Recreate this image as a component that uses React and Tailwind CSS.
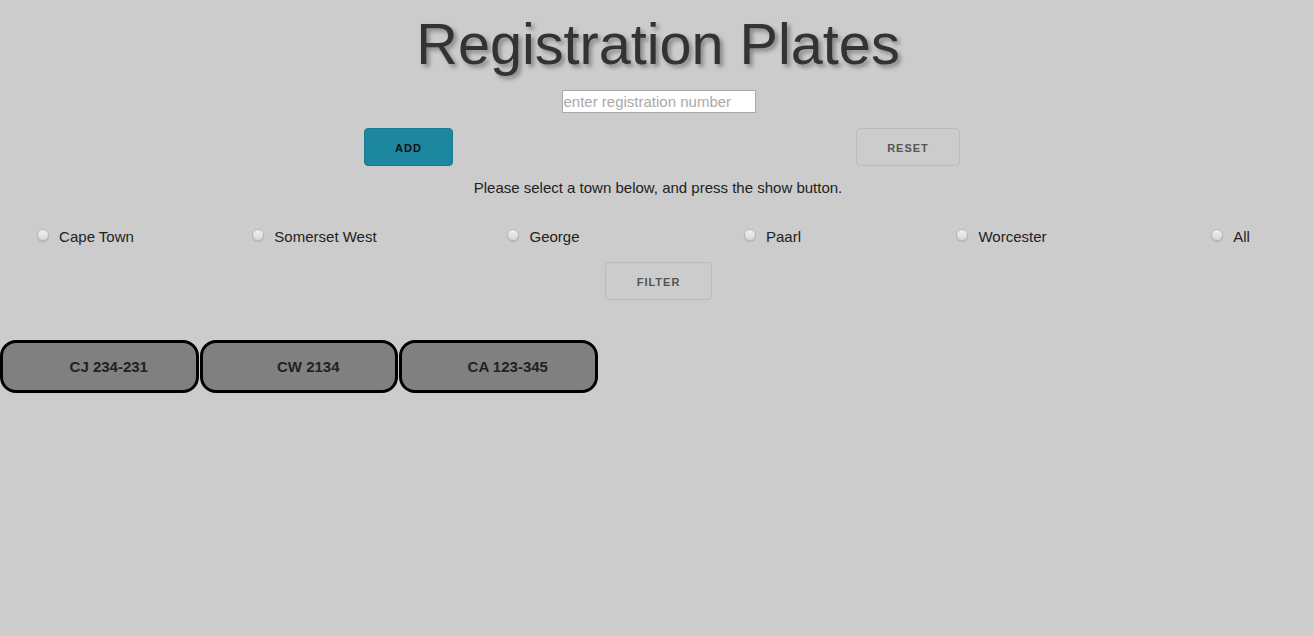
import React from "react";

const towns = ["Cape Town", "Somerset West", "George", "Paarl", "Worcester", "All"];
const plates = ["CJ 234-231", "CW 2134", "CA 123-345"];

function Radio({ label }) {
  return (
    <label className="w-[229px] shrink-0 flex justify-center">
      <span className="flex items-start h-[18px]">
        <span className="w-[12px] h-[12px] rounded-full border border-[#b8b8b8] bg-gradient-to-b from-[#f0f0f0] to-[#d8d8d8] shadow-[0_1px_1px_rgba(0,0,0,0.15)] mt-0 shrink-0"></span>
        <span className="ml-[10px] text-[15px] leading-[18px] text-[#222] mt-[-1px]">{label}</span>
      </span>
    </label>
  );
}

export default function App() {
  return (
    <div className="min-h-[636px] w-full bg-[#cccccc] font-['Liberation_Sans',Arial,sans-serif] text-[#222] overflow-hidden">
      <h1 className="pt-[15px] text-center text-[57.6px] leading-[58px] text-[#333] pl-[3px] [text-shadow:3px_3px_4px_rgba(0,0,0,0.35)]">
        Registration Plates
      </h1>
      <div className="flex justify-center mt-[17px] pl-[4px]">
        <input
          type="text"
          placeholder="enter registration number"
          className="w-[194px] h-[23px] bg-white border border-[#a9a9a9] px-[1px] text-[15px] leading-[21px] outline-none placeholder:text-[#a9a9a9]"
        />
      </div>
      <div className="flex mt-[15px] pl-[364px] gap-[403px]">
        <button className="w-[89px] h-[38px] pt-[2px] rounded-[4px] bg-[#1d879f] border border-[#1a7890] text-[11px] font-bold tracking-[1px] text-[#111] uppercase">
          Add
        </button>
        <button className="w-[104px] h-[38px] pt-[2px] rounded-[4px] border border-[#bbbbbb] text-[11px] font-bold tracking-[1px] text-[#555] uppercase">
          Reset
        </button>
      </div>
      <p className="mt-[13px] text-center text-[15px] leading-[18px] text-[#222] pl-[3px]">
        Please select a town below, and press the show button.
      </p>
      <div className="flex justify-center mt-[32px] pl-[3px]">
        {towns.map((t) => (
          <Radio key={t} label={t} />
        ))}
      </div>
      <div className="flex justify-center mt-[15px] pl-[4px]">
        <button className="w-[107px] h-[38px] pt-[2px] rounded-[4px] border border-[#bbbbbb] text-[11px] font-bold tracking-[1px] text-[#555] uppercase">
          Filter
        </button>
      </div>
      <div className="flex gap-[1px] mt-[40px]">
        {plates.map((p) => (
          <div
            key={p}
            className="w-[198.5px] h-[53px] rounded-[16px] border-[3px] border-black bg-[#808080] flex items-center justify-center pl-[19px] pt-[1px] text-[15px] font-bold text-[#222]"
          >
            {p}
          </div>
        ))}
      </div>
    </div>
  );
}
